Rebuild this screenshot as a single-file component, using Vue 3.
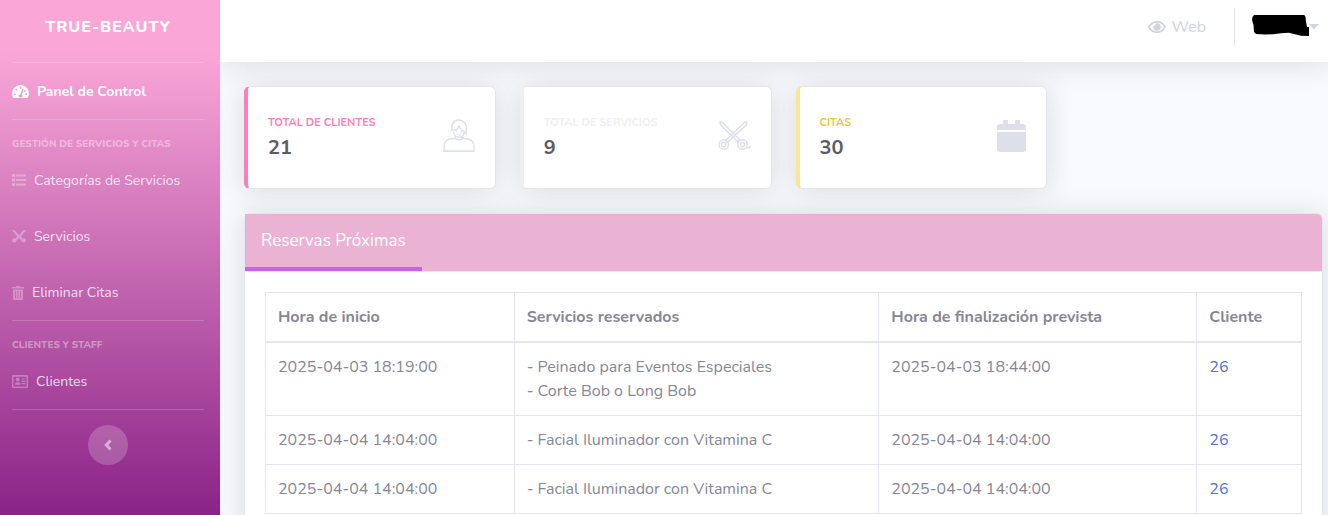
<script setup>
const groups = [
  {
    title: 'Gestión de Servicios y Citas',
    items: [
      { label: 'Categorías de Servicios', icon: 'list' },
      { label: 'Servicios', icon: 'scissors' },
      { label: 'Eliminar Citas', icon: 'trash' },
    ],
  },
  { title: 'Clientes y Staff', items: [{ label: 'Clientes', icon: 'card' }] },
]

const stats = [
  { label: 'Total de clientes', value: 21, kind: 'pink' },
  { label: 'Total de servicios', value: 9, kind: 'light' },
  { label: 'Citas', value: 30, kind: 'yellow' },
]

const bookings = [
  {
    start: '2025-04-03 18:19:00',
    services: ['Peinado para Eventos Especiales', 'Corte Bob o Long Bob'],
    end: '2025-04-03 18:44:00',
    client: 26,
  },
  { start: '2025-04-04 14:04:00', services: ['Facial Iluminador con Vitamina C'], end: '2025-04-04 14:04:00', client: 26 },
  { start: '2025-04-04 14:04:00', services: ['Facial Iluminador con Vitamina C'], end: '2025-04-04 14:04:00', client: 26 },
]
</script>

<template>
  <div class="shell">
    <nav class="sidebar">
      <a class="brand" href="#">TRUE-BEAUTY</a>
      <hr />
      <a class="item active" href="#">
        <svg width="17" height="15" viewBox="0 0 576 512" fill="currentColor">
          <path fill-rule="evenodd" d="M288 32C129 32 0 161 0 320c0 53 14 102 39 145 6 9 16 15 27 15h444c11 0 21-6 27-15 25-43 39-92 39-145C576 161 447 32 288 32zm0 64c18 0 32 14 32 32s-14 32-32 32-32-14-32-32 14-32 32-32zM96 384a32 32 0 1 1 0-64 32 32 0 0 1 0 64zm48-160a32 32 0 1 1 0-64 32 32 0 0 1 0 64zm247-41-61 184c14 12 22 29 22 49 0 12-3 23-9 32H233c-6-9-9-20-9-32 0-34 27-62 61-64l61-184c10-30 55-15 45 15zm14 70 17-51a32 32 0 1 1-17 51zm75 131a32 32 0 1 1 0-64 32 32 0 0 1 0 64z" />
        </svg>
        <span>Panel de Control</span>
      </a>
      <template v-for="g in groups" :key="g.title">
        <hr />
        <div class="heading">{{ g.title }}</div>
        <a v-for="it in g.items" :key="it.label" class="item" href="#">
          <svg v-if="it.icon === 'list'" width="14" height="14" viewBox="0 0 14 14" fill="currentColor">
            <path d="M0 0h3v3H0zM0 4.500h3v3H0zM0 9h3v3H0zM4 .5h10v2H4zM4 5h10v2H4zM4 9.500h10v2H4z" />
          </svg>
          <svg v-else-if="it.icon === 'scissors'" width="14" height="14" viewBox="0 0 14 14" fill="currentColor">
            <path fill-rule="evenodd" d="M0 .5 1 0c.7-.2 1.300 0 1.800.5L7 4.900 11.200.5c.5-.5 1.100-.7 1.800-.5l1 .5-5.200 6 1.900 1.900c1.500-.5 3.100.6 3.100 2 0 1.300-1 2.100-2.200 2.100-1.500 0-2.300-1-2.300-2.200L7 8.200l-2.300 2.100c0 1.300-.9 2.200-2.300 2.200C1 12.500 0 11.700 0 10.400c0-1.400 1.500-2.500 3.200-2l2-1.900z" />
          </svg>
          <svg v-else-if="it.icon === 'trash'" width="12" height="15" viewBox="0 0 12 15" fill="currentColor">
            <path fill-rule="evenodd" d="M0 1h3.500L4.500 0h3l1 1H12v1.500H0zM1 3.500h10v9c0 1-.6 1.500-1.500 1.500h-7C1.600 14 1 13.500 1 12.500zM3.300 5v7H4V5zm2.300 0v7h.8V5zM8 5v7h.7V5z" />
          </svg>
          <svg v-else width="16" height="14" viewBox="0 0 16 14" fill="currentColor">
            <path fill-rule="evenodd" d="M1.300 0h13.400c.8 0 1.300.5 1.300 1.300v10.400c0 .8-.5 1.300-1.300 1.300H1.300C.5 13 0 12.500 0 11.700V1.300C0 .5.500 0 1.300 0zm.2 1.700v9.800h13V1.700z" />
            <circle cx="5.700" cy="4.500" r="2" />
            <path d="M2.800 9.800c0-1.700 1-2.600 2.300-2.600h1.200c1.400 0 2.400.9 2.400 2.600zM9.500 3.500h3.800v1.100H9.500zM9.500 5.800h3.800v1.100H9.500zM9.500 8.100h3.800v1.100H9.500z" />
          </svg>
          <span>{{ it.label }}</span>
        </a>
      </template>
      <hr />
      <button class="toggle" type="button" aria-label="Contraer menú">
        <svg width="8" height="12" viewBox="0 0 8 12" fill="none" stroke="currentColor" stroke-width="3">
          <path d="M6.500 1.500 2.300 6l4.200 4.500" />
        </svg>
      </button>
    </nav>

    <div class="content">
      <header class="topbar">
        <a class="web" href="#">
          <svg width="18" height="16" viewBox="0 0 18 16" fill="none" stroke="currentColor">
            <path d="M.9 8C2.600 4.600 5.500 2.800 9 2.800S15.400 4.600 17.100 8c-1.700 3.400-4.600 5.200-8.100 5.200S2.600 11.400.9 8z" stroke-width="1.700" />
            <path d="M9 4.200a3.800 3.800 0 1 1-3.600 2.600 1.800 1.800 0 0 0 2.200-2.300A3.800 3.800 0 0 1 9 4.200z" fill="currentColor" stroke="none" />
          </svg>
          <span>Web</span>
        </a>
        <span class="separator"></span>
        <button class="user" type="button" aria-label="Menú de usuario">
          <svg width="57" height="24" viewBox="0 2 57 24">
            <path d="M.5 4 2 2l4-.8L14 1l7 .7 6-.6 6 .4 8-.7 7 .4 4 .5 1.500 2 .5 5 1 5.200h2V23l-8-.3-5-1.200-7-1.700-8 .5-8 1-8 .3-9-.5-2-2-.5-7L0 7z" fill="#000" />
          </svg>
          <svg width="10" height="6" viewBox="0 0 10 6" fill="currentColor"><path d="M0 0h10L5.500 5h-1z" /></svg>
        </button>
      </header>

      <main class="main">
        <section class="stats">
          <article v-for="s in stats" :key="s.label" class="stat" :class="s.kind">
            <div>
              <div class="stat-label">{{ s.label }}</div>
              <div class="stat-value">{{ s.value }}</div>
            </div>
            <svg v-if="s.kind === 'pink'" width="32" height="34" viewBox="0 0 32 34" fill="none" stroke="currentColor" stroke-width="1.400">
              <path d="M1 32.300v-4.500c0-4.600 3-7.300 7.500-8l3.500-.6c1.200 2 6.800 2 8 0l3.500.6c4.500.7 7.500 3.400 7.500 8v4.500z" />
              <path d="M12.300 16.800v2.700M19.700 16.800v2.700M9 11.500C7.700 5 11 1 15.500 1c5 0 8.500 3.500 8 9l-.6 4.500-2-2.500c-2.500-.8-4.200-2.800-4.900-5.500-.5 3.500-3 5-7 5zM10.500 12.500c.5 3.500 3 5.800 5.500 5.800s4.800-1.800 5.500-5" />
              <path d="M14.500 15.500c1 .9 2.500.9 3.500 0M12.500 12.300H14M17.800 12.300h1.500" stroke-width="1" />
              <path d="M2 31.300h29" stroke-dasharray="1 1" stroke-width="1" />
            </svg>
            <svg v-else-if="s.kind === 'light'" width="33" height="32" viewBox="0 0 33 32" fill="none" stroke="currentColor" stroke-width="1.400">
              <path d="m2.200 2 .3 2.800 17.200 16.700 2-1.800L4 2zM28.800 2l-.3 2.800-19 17.400-1.800-1.700L27 2z" />
              <circle cx="5.700" cy="24.500" r="4.700" /><circle cx="5.700" cy="24.500" r="2.200" />
              <circle cx="24.500" cy="24.500" r="4.700" /><circle cx="24.500" cy="24.500" r="2.200" />
              <path d="M28 27.800c2 .5 3.700.2 4.500-2" />
            </svg>
            <svg v-else width="29" height="32" viewBox="0 0 29 32" fill="currentColor">
              <path d="M0 10V7c0-2 1-3 3-3h3V1c0-.6.400-1 1-1h3c.6 0 1 .4 1 1v3h7V1c0-.6.4-1 1-1h3c.6 0 1 .4 1 1v3h3c2 0 3 1 3 3v3zM0 12h29v17c0 2-1 3-3 3H3c-2 0-3-1-3-3z" />
            </svg>
          </article>
        </section>

        <section class="panel">
          <div class="tabs"><button class="tab" type="button">Reservas Próximas</button></div>
          <div class="panel-body">
            <table>
              <colgroup><col class="c1" /><col class="c2" /><col class="c3" /><col /></colgroup>
              <thead>
                <tr>
                  <th>Hora de inicio</th>
                  <th>Servicios reservados</th>
                  <th>Hora de finalización prevista</th>
                  <th>Cliente</th>
                </tr>
              </thead>
              <tbody>
                <tr v-for="(b, i) in bookings" :key="i">
                  <td>{{ b.start }}</td>
                  <td><div v-for="name in b.services" :key="name">- {{ name }}</div></td>
                  <td>{{ b.end }}</td>
                  <td><a href="#">{{ b.client }}</a></td>
                </tr>
              </tbody>
            </table>
          </div>
        </section>
      </main>
    </div>
  </div>
</template>

<style>
body {
  margin: 0;
}
</style>

<style scoped>
* {
  box-sizing: border-box;
}
.shell {
  display: flex;
  height: 100vh;
  overflow: hidden;
  background: #f8f9fc;
  color: #858796;
  font-family: Nunito, Lato, "Liberation Sans", sans-serif;
  font-size: 16px;
  line-height: 24px;
}
a {
  text-decoration: none;
}
button {
  border: 0;
  padding: 0;
  background: none;
  font: inherit;
  cursor: pointer;
}
svg {
  display: block;
  flex: none;
}
.sidebar {
  position: relative;
  z-index: 1;
  display: flex;
  flex-direction: column;
  flex: none;
  width: 220px;
  padding: 0 16px 0 12px;
  background: linear-gradient(180deg, #faa7d8 10%, #8a2387 100%);
}
.sidebar hr {
  flex: none;
  width: 100%;
  height: 1px;
  margin: 0;
  border: 0;
  background: rgba(255, 255, 255, 0.18);
}
.brand {
  height: 62px;
  padding-top: 15px;
  color: #fff;
  font-weight: 800;
  letter-spacing: 1px;
  text-align: center;
}
.item {
  display: flex;
  align-items: center;
  gap: 8px;
  height: 56px;
  padding-top: 2px;
  color: rgba(255, 255, 255, 0.8);
  font-size: 14px;
}
.item svg {
  color: rgba(255, 255, 255, 0.3);
}
.item.active {
  color: #fff;
  font-weight: 700;
}
.item.active svg {
  margin-bottom: 2px;
  color: #fff;
}
.heading {
  height: 32px;
  padding-top: 16px;
  color: rgba(255, 255, 255, 0.4);
  font-size: 10px;
  font-weight: 800;
  line-height: 16px;
  text-transform: uppercase;
}
.toggle {
  display: grid;
  place-items: center;
  flex: none;
  width: 40px;
  height: 40px;
  margin: 15px auto 0;
  border-radius: 50%;
  background: rgba(255, 255, 255, 0.2);
  color: rgba(255, 255, 255, 0.5);
}
.content {
  flex: 1;
  min-width: 0;
}
.topbar {
  display: flex;
  align-items: center;
  justify-content: flex-end;
  height: 62px;
  padding: 0 9px 8px 0;
  background: #fff;
  color: #d1d3e2;
  box-shadow: 0 2px 28px rgba(58, 59, 69, 0.15);
}
.web {
  display: flex;
  align-items: center;
  gap: 5px;
  color: inherit;
}
.separator {
  width: 1px;
  height: 38px;
  margin: 0 17px 0 28px;
  background: #e3e6f0;
}
.user {
  display: flex;
  align-items: center;
  color: inherit;
}
.main {
  padding: 24px 5px 24px 24px;
}
.stats {
  display: grid;
  grid-template-columns: repeat(4, 1fr);
  gap: 24px;
  margin-bottom: 24px;
}
.stat {
  display: flex;
  align-items: center;
  justify-content: space-between;
  height: 103px;
  padding: 0 20px;
  border: 1px solid #e3e6f0;
  border-left-width: 4px;
  border-radius: 6px;
  background: #fff;
  box-shadow: 0 2px 28px rgba(58, 59, 69, 0.15);
}
.stat svg {
  margin-bottom: 4px;
  color: #dddfeb;
}
.stat-label {
  margin-bottom: 5px;
  font-size: 11px;
  font-weight: 700;
  line-height: 16px;
  text-transform: uppercase;
}
.stat-value {
  color: #5a5c69;
  font-size: 20px;
  font-weight: 700;
}
.pink {
  border-left-color: #ff7eb6;
}
.pink .stat-label {
  color: #ff7eb6;
}
.light {
  border-left-color: #f0f0f0;
}
.light .stat-label {
  color: #f0f0f0;
}
.yellow {
  border-left-color: #fbe59a;
}
.yellow .stat-label {
  color: #f6c23e;
}
.panel {
  border: 1px solid #e3e6f0;
  border-radius: 6px;
  background: #fff;
  box-shadow: 0 2px 28px rgba(58, 59, 69, 0.15);
}
.tabs {
  display: flex;
  border-bottom: 1px solid #e3e6f0;
  border-radius: 0 5px 0 0;
  background: #eab3d4;
}
.tab {
  height: 57px;
  padding: 0 16px;
  border-bottom: 4px solid #c961ec;
  color: #fff;
  font-size: 17px;
}
.panel-body {
  padding: 20px;
}
table {
  width: 100%;
  border-collapse: collapse;
  table-layout: fixed;
}
.c1 {
  width: 24%;
}
.c2 {
  width: 35.2%;
}
.c3 {
  width: 30.7%;
}
th,
td {
  padding: 12px;
  border: 1px solid #e3e6f0;
  text-align: left;
  vertical-align: top;
}
th {
  border-bottom-width: 2px;
  font-weight: 700;
}
td a {
  color: #4e73df;
}
</style>
